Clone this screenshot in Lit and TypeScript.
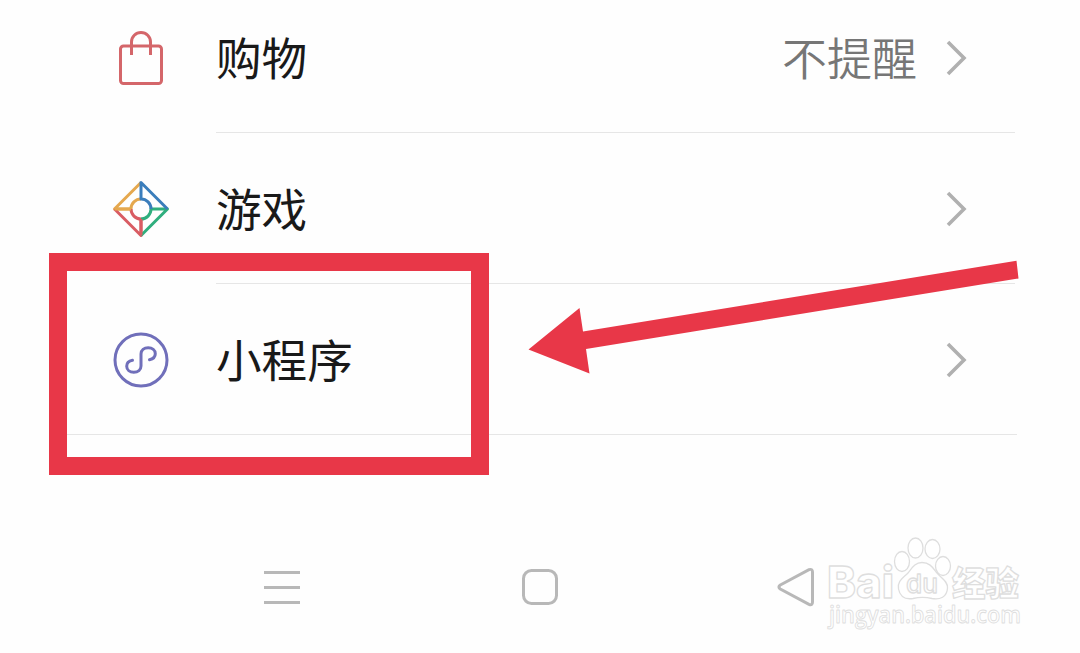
import { LitElement, html, css, svg, nothing } from 'lit';
import { customElement, property } from 'lit/decorators.js';

const shoppingIcon = svg`
  <g fill="none" stroke="#d4666a" stroke-width="3">
    <rect x="10.5" y="18" width="41" height="37.5" rx="3"/>
    <path d="M21.5 27 V14 A9.5 9.5 0 0 1 40.5 14 V27"/>
  </g>
`;

const gamesIcon = svg`
  <g fill="none" stroke-width="3" stroke-linejoin="round">
    <path d="M31 3.5 L4.5 30 H21 A10 10 0 0 1 31 20" stroke="#e5a84e"/>
    <path d="M4.5 30 L31 56.5 V40 A10 10 0 0 1 21 30" stroke="#d95c63"/>
    <path d="M31 56.5 L57.5 30 H41 A10 10 0 0 1 31 40" stroke="#2fae7d"/>
    <path d="M57.5 30 L31 3.5 V20 A10 10 0 0 1 41 30" stroke="#3a7dbb"/>
    <path d="M4.5 30 H21" stroke="#e5a84e"/>
    <path d="M31 40 V56.5" stroke="#d95c63"/>
  </g>
`;

const miniProgramIcon = svg`
  <g fill="none" stroke="#706fba" stroke-width="3" stroke-linecap="round">
    <circle cx="31" cy="30" r="26"/>
    <path d="M39.5 29.7 C43 29 45.3 26.8 45.3 23.8 C45.3 20.3 42.2 17.8 38.2 17.8 C34.1 17.8 31 20.3 31 24 V36 C31 39.7 27.9 42.2 23.8 42.2 C19.8 42.2 16.7 39.7 16.7 36.2 C16.7 33.2 19 31 22.5 30.3"/>
  </g>
`;

@customElement('setting-row')
export class SettingRow extends LitElement {
  @property()
  label = "";

  @property()
  value = "";

  @property({attribute: false})
  icon: unknown = nothing;

  @property({type: Boolean, reflect: true})
  last = false;

  static styles = css`
    :host{
      box-sizing:border-box;
      display:flex;
      flex:none;
      height:151px;
      margin:0 65px 0 110px;
    }
    :host([last]){
      margin:0 63px 0 67px;
      padding:0 2px 0 43px;
      border-bottom:1px solid #e6e6e6;
    }
    .icon{
      flex:none;
      width:62px;
      height:60px;
      margin-top:46px;
      margin-right:44px;
    }
    .body{
      box-sizing:border-box;
      flex:1;
      display:flex;
      align-items:flex-start;
      border-bottom:1px solid #e6e6e6;
      font-size:45.6px;
      line-height:60px;
      padding-top:44px;
    }
    :host([last]) .body{
      border-bottom:none;
    }
    .label{
      flex:1;
      color:#191919;
    }
    .value{
      color:#767676;
      font-size:45px;
      font-weight:350;
      margin-top:1px;
      margin-right:29px;
    }
    .chevron{
      width:22px;
      height:40px;
      margin-top:12px;
      margin-right:47px;
    }
  `

  render(){
    return html`
      <svg class="icon" viewBox="0 0 62 60">${this.icon}</svg>
      <div class="body">
        <div class="label">${this.label}</div>
        <div class="value">${this.value}</div>
        <svg class="chevron" viewBox="0 0 22 40">
          <path d="M2 4 L18 20 L2 36" fill="none" stroke="#b0b0b0" stroke-width="3.6"/>
        </svg>
      </div>
    `
  }
}

@customElement('nav-buttons')
export class NavButtons extends LitElement {
  static styles = css`
    :host{
      display:grid;
      grid-template-columns:258px 256px 40px;
      padding-left:262px;
      margin-top:132px;
    }
    svg{
      width:40px;
      height:40px;
      fill:none;
      stroke:#b8b8b8;
      stroke-width:3;
    }
  `

  render(){
    return html`
      <svg viewBox="0 0 40 40"><path d="M2 5.5 H38 M2 20.5 H38 M2 35.5 H38"/></svg>
      <svg viewBox="0 0 40 40"><rect x="3.5" y="3.5" width="33" height="33" rx="8"/></svg>
      <svg viewBox="0 0 40 40"><path d="M4.3 18 L33 2.7 Q36.5 1.5 36.5 5 V35 Q36.5 38.8 33 37.3 L4.3 22 Q1.5 20 4.3 18 Z"/></svg>
    `
  }
}

@customElement('site-watermark')
export class SiteWatermark extends LitElement {
  static styles = css`
    svg{
      display:block;
      width:210px;
      height:110px;
    }
    .shape{
      fill:#fff;
      stroke:#dedede;
      stroke-width:1.3;
      stroke-linejoin:round;
    }
    .brand{
      font-family:Inter, sans-serif;
      font-weight:800;
    }
    .inner{
      font-family:Inter, sans-serif;
      font-weight:500;
    }
    .cjk{
      font-family:"Noto Sans CJK SC", sans-serif;
      font-weight:900;
    }
    .url{
      font-family:"Open Sans", sans-serif;
      font-weight:600;
      stroke-width:0.9;
    }
  `

  render(){
    return html`
      <svg viewBox="0 0 210 110">
        <text class="shape brand" x="7" y="68" font-size="44" textLength="67" lengthAdjust="spacingAndGlyphs">Bai</text>
        <ellipse class="shape" cx="82" cy="31.5" rx="7.5" ry="10"/>
        <ellipse class="shape" cx="95.5" cy="18" rx="7.5" ry="10"/>
        <ellipse class="shape" cx="112.5" cy="19" rx="7.5" ry="9.5"/>
        <ellipse class="shape" cx="123" cy="36" rx="7.5" ry="9.5"/>
        <path class="shape" d="M102 32.5 C95 32.5 92 38 88 43 C83 48 77 51 78.5 59 C80 67 86 69.5 93 68.5 C99 67 106 67 112 68.5 C120 70 127 67 127.5 58 C128 51 121 48 117 43 C113 38 110 32.5 102 32.5 Z"/>
        <text class="shape inner" x="86" y="63" font-size="26" textLength="32" lengthAdjust="spacingAndGlyphs">du</text>
        <text class="shape cjk" x="132" y="66" font-size="34" textLength="67" lengthAdjust="spacingAndGlyphs">经验</text>
        <text class="shape url" x="9" y="93" font-size="23" textLength="192" lengthAdjust="spacingAndGlyphs">jingyan.baidu.com</text>
      </svg>
    `
  }
}

@customElement('app-root')
export class AppRoot extends LitElement {
  static styles = css`
    :host{
      display:block;
      position:relative;
      box-sizing:border-box;
      width:1080px;
      height:653px;
      overflow:hidden;
      background:#fefefe;
      font-family:"Noto Sans CJK SC", sans-serif;
    }
    .list{
      display:flex;
      flex-direction:column;
      margin-top:-18px;
    }
    .highlight{
      position:absolute;
      box-sizing:border-box;
      left:49px;
      top:253px;
      width:440px;
      height:222px;
      border:18px solid #e83748;
    }
    .arrow{
      position:absolute;
      left:520px;
      top:250px;
      width:510px;
      height:130px;
      fill:#e83748;
    }
    .watermark{
      position:absolute;
      left:820px;
      top:530px;
    }
  `

  render(){
    return html`
      <div class="list">
        <setting-row label="购物" value="不提醒" .icon=${shoppingIcon}></setting-row>
        <setting-row label="游戏" .icon=${gamesIcon}></setting-row>
        <setting-row label="小程序" .icon=${miniProgramIcon} last></setting-row>
      </div>
      <nav-buttons></nav-buttons>
      <div class="highlight"></div>
      <svg class="arrow" viewBox="0 0 510 130">
        <path d="M8.5 99.5 L59.5 58 L63 81.5 L496.5 10.8 L498.5 28.5 L66 99 L69.5 123.5 Z"/>
      </svg>
      <site-watermark class="watermark"></site-watermark>
    `
  }
}
